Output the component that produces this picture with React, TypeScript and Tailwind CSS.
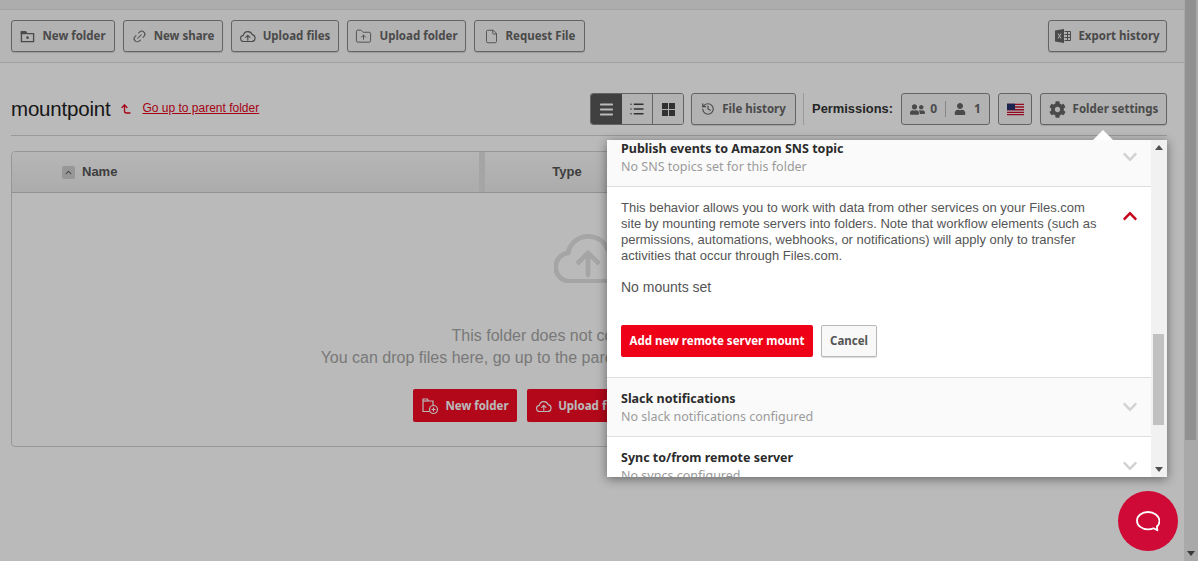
import { CornerLeftUp, File, FolderUp, History, Link2, List, Menu } from "lucide-react";
import { FaChevronDown, FaChevronUp, FaCog, FaUser, FaUserFriends } from "react-icons/fa";
import type { ReactNode } from "react";

const ubuntu = "font-['Noto_Sans',sans-serif] font-bold";

function FolderDot({ className }: { className?: string }) {
  return (
    <svg viewBox="0 0 16 16" className={className} fill="none" stroke="currentColor" strokeWidth="1.4">
      <path d="M1.5 3h4.5l1.5 2h7v8.5h-13z" />
      <path d="M1.5 3h4.5v2h-4.5z" fill="currentColor" />
      <circle cx="8" cy="9.2" r="1.4" fill="currentColor" stroke="none" />
    </svg>
  );
}

function FolderPlusRed({ className }: { className?: string }) {
  return (
    <svg viewBox="0 0 18 18" className={className} fill="none" stroke="currentColor" strokeWidth="1.2">
      <path d="M8.5 14.5H2V2h4.5l1 2H12v4" />
      <path d="M2 4h5" />
      <circle cx="12.5" cy="12.5" r="4" />
      <path d="M12.5 10.5v4M10.5 12.5h4" />
    </svg>
  );
}

function CloudArrow({ className, strokeWidth = 1.5 }: { className?: string; strokeWidth?: number }) {
  return (
    <svg viewBox="1.5 2.5 22 17" className={className} fill="none" stroke="currentColor" strokeWidth={strokeWidth} strokeLinejoin="round" strokeLinecap="round">
      <path d="M6.5 19a4.5 4.5 0 0 1-.6-8.96A6.5 6.5 0 0 1 18.4 9.1 5 5 0 0 1 18 19z" />
      <path d="M12.2 17v-7M9.2 13l3-3 3 3" />
    </svg>
  );
}

function ExcelIcon({ className }: { className?: string }) {
  return (
    <svg viewBox="0 0 16 14" className={className}>
      <path d="M0 1.5 9 0v14L0 12.5z" fill="currentColor" />
      <path d="M3 4.5l3 5M6 4.5l-3 5" stroke="#f4f4f4" strokeWidth="1" />
      <path d="M9.5 2.5h6v9h-6M9.5 5.5h6M9.5 8.5h6M12.5 2.5v9" fill="none" stroke="currentColor" strokeWidth="1" />
    </svg>
  );
}

function ToolButton({ icon, label, className }: { icon: ReactNode; label: string; className?: string }) {
  return (
    <button className={`flex h-[32px] items-center justify-center gap-[7px] rounded-[3px] border border-[#8a8a8a] bg-[#f4f4f4] text-[11.5px] text-[#666666] shadow-[0_1px_1px_rgba(0,0,0,0.15)] ${ubuntu} ${className ?? ""}`}>
      {icon}
      {label}
    </button>
  );
}

function RedButton({ icon, label, className }: { icon: ReactNode; label: string; className?: string }) {
  return (
    <button className={`flex h-[33px] items-center justify-center gap-[6px] rounded-[2px] bg-[#f50b24] text-[11.5px] text-white ${ubuntu} ${className ?? ""}`}>
      {icon}
      {label}
    </button>
  );
}

function Row({ title, sub, shaded, height, chevron }: { title: string; sub: string; shaded?: boolean; height: string; chevron: string }) {
  return (
    <div className={`relative shrink-0 border-b border-[#dedede] pl-[14px] ${height} ${shaded ? "bg-[#fafafa]" : "bg-white"}`}>
      <div className={`text-[12.5px] leading-[18px] text-[#2b2b2b] ${ubuntu}`}>{title}</div>
      <div className="font-['Noto_Sans',sans-serif] text-[12.5px] leading-[18px] text-[#9a9a9a]">{sub}</div>
      <FaChevronDown className={`absolute right-[13px] h-[16px] w-[16px] text-[#d2d2d2] ${chevron}`} />
    </div>
  );
}

export default function App() {
  return (
    <div className="relative flex h-[561px] w-[1198px] overflow-hidden bg-white font-['Liberation_Sans',Arial,sans-serif]">
      <div className="min-w-0 flex-1">
        <div className="h-[10px] border-b border-[#e2e2e2] bg-[#eeeeee]" />

        {/* Action toolbar */}
        <div className="flex h-[53px] items-center border-b border-[#dddddd] bg-[#fafafa] px-[11px] pr-[17px]">
          <div className="flex gap-[8px]">
            <ToolButton icon={<FolderDot className="h-[15px] w-[15px]" />} label="New folder" className="w-[104px]" />
            <ToolButton icon={<Link2 className="h-[15px] w-[15px] -rotate-45" strokeWidth={1.6} />} label="New share" className="w-[100px]" />
            <ToolButton icon={<CloudArrow className="h-[12px] w-[16px]" strokeWidth={1.6} />} label="Upload files" className="w-[108px]" />
            <ToolButton icon={<FolderUp className="h-[17px] w-[17px]" strokeWidth={1.3} />} label="Upload folder" className="w-[119px]" />
            <ToolButton icon={<File className="h-[15px] w-[15px]" strokeWidth={1.4} />} label="Request File" className="w-[111px]" />
          </div>
          <ToolButton icon={<ExcelIcon className="h-[14px] w-[16px]" />} label="Export history" className="ml-auto w-[119px]" />
        </div>

        {/* Folder heading */}
        <div className="mx-[11px] mr-[17px] mt-[30px] flex h-[43px] items-start border-b border-[#d4d4d4]">
          <h1 className="mt-[2px] text-[20.5px] leading-[28px] tracking-[-0.2px] text-[#222222]">mountpoint</h1>
          <CornerLeftUp className="ml-[10px] mt-[10px] h-[12px] w-[12px] text-[#e2041b]" strokeWidth={2.6} />
          <a className="ml-[10px] mt-[8px] text-[12px] leading-[14px] text-[#e2041b] underline">Go up to parent folder</a>

          <div className="ml-auto flex items-center">
            <div className="flex h-[32px] w-[94px] overflow-hidden rounded-[3px] border border-[#8a8a8a] text-[#444444]">
              <span className="flex w-[31px] items-center justify-center bg-[#585858] text-white"><Menu className="h-[17px] w-[17px]" strokeWidth={2.6} /></span>
              <span className="flex w-[31px] items-center justify-center border-r border-[#8a8a8a] bg-[#f4f4f4]"><List className="h-[16px] w-[16px]" strokeWidth={2.2} /></span>
              <span className="flex flex-1 items-center justify-center bg-[#f4f4f4]">
                <span className="grid grid-cols-2 gap-[1px]">
                  <i className="h-[6px] w-[6px] bg-[#444444]" />
                  <i className="h-[6px] w-[6px] bg-[#444444]" />
                  <i className="h-[6px] w-[6px] bg-[#444444]" />
                  <i className="h-[6px] w-[6px] bg-[#444444]" />
                </span>
              </span>
            </div>
            <ToolButton icon={<History className="h-[14px] w-[14px]" strokeWidth={2} />} label="File history" className="ml-[7px] w-[105px]" />
            <div className="ml-[7px] h-[32px] w-px bg-[#d4d4d4]" />
            <span className="ml-[8px] text-[12.9px] font-bold text-[#333333]">Permissions:</span>
            <button className={`ml-[8px] flex h-[32px] w-[89px] items-center justify-center rounded-[3px] border border-[#8a8a8a] bg-[#f4f4f4] text-[12px] text-[#666666] ${ubuntu}`}>
              <FaUserFriends className="h-[15px] w-[15px]" />
              <span className="ml-[5px]">0</span>
              <i className="mx-[8px] h-[16px] w-px bg-[#bbbbbb]" />
              <FaUser className="h-[12px] w-[12px]" />
              <span className="ml-[8px]">1</span>
            </button>
            <button className="ml-[8px] flex h-[32px] w-[34px] items-center justify-center rounded-[3px] border border-[#8a8a8a] bg-[#f4f4f4]">
              <svg viewBox="0 0 19 13" className="h-[13px] w-[17px]">
                <rect width="19" height="13" fill="#f4f4f4" />
                <path d="M0 0h19v1.5H0zM0 3h19v1.5H0zM0 6h19v1.5H0zM0 9h19v1.5H0zM0 11.6h19v1.4H0z" fill="#c8102e" />
                <rect width="9" height="7" fill="#27306e" />
              </svg>
            </button>
            <ToolButton icon={<FaCog className="h-[17px] w-[17px]" />} label="Folder settings" className="ml-[8px] w-[127px]" />
          </div>
        </div>

        {/* Empty file table */}
        <div className="ml-[11px] mr-[17px] mt-[15px] h-[296px] overflow-hidden rounded-[4px] border border-[#cfcfcf]">
          <div className="flex h-[41px] border-b border-[#c8c8c8] bg-gradient-to-b from-[#fafafa] to-[#ececec] text-[13px] font-bold text-[#555555]">
            <div className="flex w-[473px] items-center border-r-[6px] border-[#e2e2e2] pl-[50px]">
              <span className="flex h-[13px] w-[13px] items-center justify-center rounded-[2px] bg-[#d0d0d0]">
                <FaChevronUp className="h-[7px] w-[7px] text-[#666666]" />
              </span>
              <span className="ml-[7px]">Name</span>
            </div>
            <div className="flex w-[164px] items-center justify-center">Type</div>
          </div>
          <div className="flex flex-col items-center pt-[36px]">
            <CloudArrow className="h-[54px] w-[70px] text-[#e2e2e2]" strokeWidth={1.5} />
            <p className="mt-[42px] text-[16px] leading-[22px] text-[#a6a6a6]">This folder does not contain any folder.</p>
            <p className="text-[16px] leading-[22px] text-[#a6a6a6]">You can drop files here, go up to the parent folder, or use the buttons below.</p>
            <div className="mt-[20px] flex gap-[10px]">
              <RedButton icon={<FolderPlusRed className="h-[18px] w-[18px]" />} label="New folder" className="w-[104px]" />
              <RedButton icon={<CloudArrow className="h-[12px] w-[16px]" strokeWidth={1.6} />} label="Upload files" className="w-[108px]" />
              <RedButton icon={<FolderUp className="h-[15px] w-[15px]" strokeWidth={1.6} />} label="Upload folder" className="w-[120px]" />
            </div>
          </div>
        </div>
      </div>

      {/* Window scrollbar */}
      <div className="flex w-[14px] shrink-0 flex-col bg-[#e8e8e8]">
        <div className="ml-px h-[440px] w-[11px] bg-[#c7c7c7]" />
        <div className="mt-auto flex h-[16px] items-center justify-center text-[#505050]">
          <i className="border-x-[4px] border-t-[5px] border-x-transparent border-t-current" />
        </div>
      </div>

      {/* Dimmed backdrop */}
      <div className="absolute inset-0 bg-black/[0.27]" />

      {/* Folder settings popover */}
      <div className="absolute left-[607px] top-[140px] flex h-[337px] w-[560px] bg-white shadow-[0_2px_10px_rgba(0,0,0,0.45)]">
        <div className="absolute -top-[10px] left-[486px] h-0 w-0 border-x-[10px] border-b-[10px] border-x-transparent border-b-white" />
        <div className="flex min-w-0 flex-1 flex-col overflow-hidden">
          <Row title="Publish events to Amazon SNS topic" sub="No SNS topics set for this folder" shaded height="h-[47px]" chevron="top-[9px]" />
          <div className="relative h-[191px] shrink-0 border-b border-[#dedede] pl-[14px] pt-[13px]">
            <p className="w-[480px] text-[13px] leading-[16px] text-[#555555]">
              This behavior allows you to work with data from other services on your Files.com site by mounting remote servers into folders. Note that workflow elements (such as permissions, automations, webhooks, or notifications) will apply only to transfer activities that occur through Files.com.
            </p>
            <FaChevronUp className="absolute right-[13px] top-[21px] h-[16px] w-[16px] text-[#c8001a]" />
            <p className="mt-[13px] text-[14px] leading-[20px] text-[#555555]">No mounts set</p>
            <div className="mt-[28px] flex gap-[8px]">
              <button className={`flex h-[32px] w-[192px] items-center justify-center rounded-[2px] bg-[#ee0016] text-[11.5px] text-white ${ubuntu}`}>Add new remote server mount</button>
              <button className={`flex h-[32px] w-[56px] items-center justify-center rounded-[2px] border border-[#b8b8b8] bg-[#f8f8f8] text-[11.5px] text-[#555555] shadow-[0_1px_1px_rgba(0,0,0,0.15)] ${ubuntu}`}>Cancel</button>
            </div>
          </div>
          <Row title="Slack notifications" sub="No slack notifications configured" shaded height="h-[59px] pt-[12px]" chevron="top-[21px]" />
          <Row title="Sync to/from remote server" sub="No syncs configured" height="h-[59px] pt-[12px]" chevron="top-[21px]" />
        </div>

        {/* Popover scrollbar */}
        <div className="relative w-[16px] shrink-0 bg-[#f1f1f1]">
          <i className="absolute left-[4px] top-[5px] border-x-[4px] border-b-[5px] border-x-transparent border-b-[#505050]" />
          <div className="absolute left-[2px] top-[194px] h-[91px] w-[11px] bg-[#c1c1c1]" />
          <i className="absolute bottom-[5px] left-[4px] border-x-[4px] border-t-[5px] border-x-transparent border-t-[#505050]" />
        </div>
      </div>

      {/* Chat launcher */}
      <button className="absolute left-[1118px] top-[491px] flex h-[60px] w-[60px] items-center justify-center rounded-full bg-[#cf0a36]">
        <svg viewBox="0 0 24 21" className="h-[21px] w-[24px]" fill="none" stroke="white" strokeWidth="1.8">
          <path d="M12 1C5.9 1 1 4.8 1 9.7s4.9 8.7 11 8.7c2 0 4-.4 5.5-1.1l3.9 2-.5-3.8c1.9-1.6 2.6-3.7 2.6-5.8C23 4.8 18.1 1 12 1z" strokeLinejoin="round" />
        </svg>
      </button>
    </div>
  );
}
